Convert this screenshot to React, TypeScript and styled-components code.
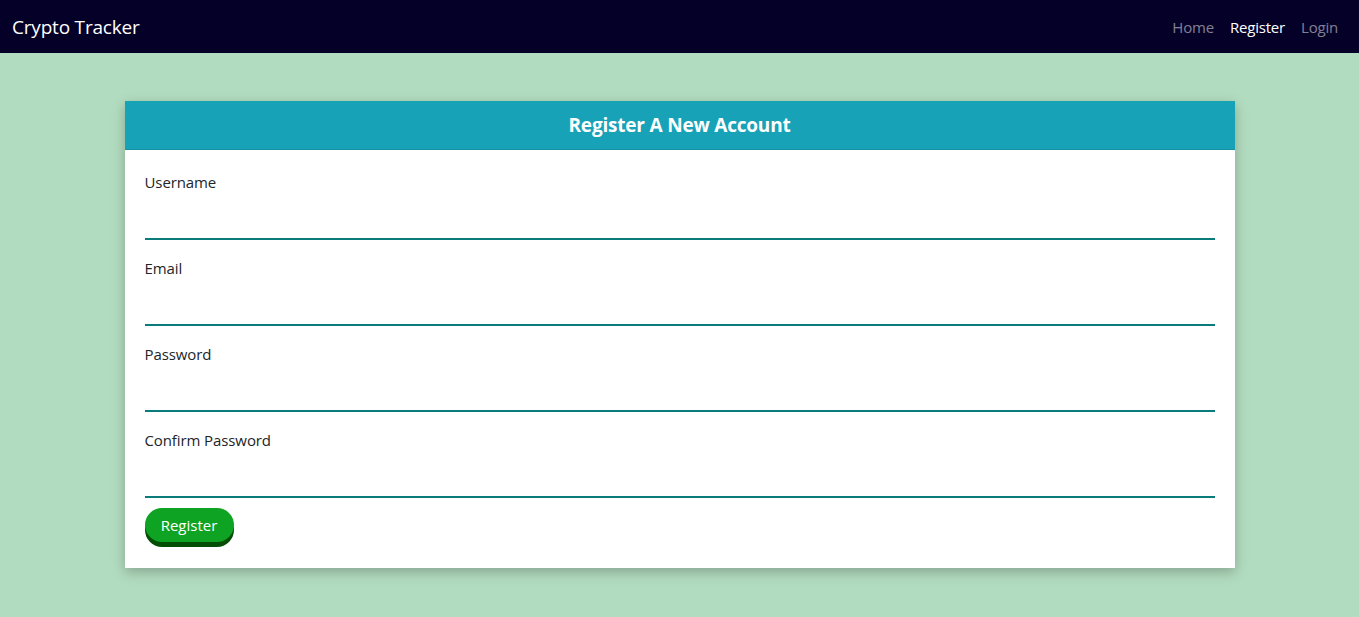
import React from "react";
import styled, { createGlobalStyle } from "styled-components";

const Global = createGlobalStyle`
  html, body { margin: 0; padding: 0; }
  body {
    background: #b2dcbf;
    font-family: "Open Sans", "Noto Sans", sans-serif;
    font-size: 15px;
    color: #212529;
    min-height: 617px;
  }
  * { box-sizing: border-box; }
`;

const Nav = styled.nav`
  height: 53px;
  background: #050028;
  display: flex;
  align-items: center;
  justify-content: space-between;
  padding: 0 13px 0 12px;
`;

const Brand = styled.a`
  color: #fff;
  font-size: 19px;
  text-decoration: none;
  letter-spacing: -0.2px;
`;

const Links = styled.div`
  display: flex;
  gap: 0;
`;

const NavLink = styled.a<{ $active?: boolean }>`
  color: ${(p) => (p.$active ? "#fff" : "rgba(255,255,255,0.5)")};
  font-size: 15px;
  padding: 0 8px;
  text-decoration: none;
  letter-spacing: -0.2px;
`;

const Container = styled.main`
  width: 1110px;
  margin: 48px auto 0;
`;

const Card = styled.section`
  background: #fff;
  box-shadow: 0 4px 12px rgba(0, 0, 0, 0.25);
`;

const CardHeader = styled.h2`
  margin: 0;
  height: 49px;
  background: #17a2b8;
  color: #fff;
  font-size: 19px;
  font-weight: 700;
  display: flex;
  align-items: center;
  justify-content: center;
  border-bottom: 1px solid rgba(0, 0, 0, 0.1);
  letter-spacing: -0.2px;
`;

const CardBody = styled.form`
  padding: 20px 20px 20px;
  display: flex;
  flex-direction: column;
`;

const Group = styled.div`
  display: flex;
  flex-direction: column;
  margin-bottom: 16px;
  &:last-of-type { margin-bottom: 10px; }
`;

const Label = styled.label`
  line-height: 24px;
  margin-bottom: 8px;
  font-size: 15px;
  letter-spacing: -0.1px;
`;

const Input = styled.input`
  height: 38px;
  border: none;
  border-bottom: 2px solid #0a7b7b;
  outline: none;
  font: inherit;
  padding: 0 12px;
  background: transparent;
`;

const Button = styled.button`
  align-self: flex-start;
  width: 89px;
  height: 34px;
  border: none;
  border-radius: 17px;
  background: #0ea323;
  color: #fff;
  font-family: inherit;
  font-size: 15px;
  box-shadow: 0 5px 0 #034d05;
  margin-bottom: 6px;
  cursor: pointer;
`;

const fields = ["Username", "Email", "Password", "Confirm Password"];

export default function App() {
  return (
    <>
      <Global />
      <Nav>
        <Brand href="#">Crypto Tracker</Brand>
        <Links>
          <NavLink href="#">Home</NavLink>
          <NavLink href="#" $active>Register</NavLink>
          <NavLink href="#">Login</NavLink>
        </Links>
      </Nav>
      <Container>
        <Card>
          <CardHeader>Register A New Account</CardHeader>
          <CardBody onSubmit={(e) => e.preventDefault()}>
            {fields.map((f) => (
              <Group key={f}>
                <Label>{f}</Label>
                <Input type={f.includes("Password") ? "password" : "text"} />
              </Group>
            ))}
            <Button type="submit">Register</Button>
          </CardBody>
        </Card>
      </Container>
    </>
  );
}
